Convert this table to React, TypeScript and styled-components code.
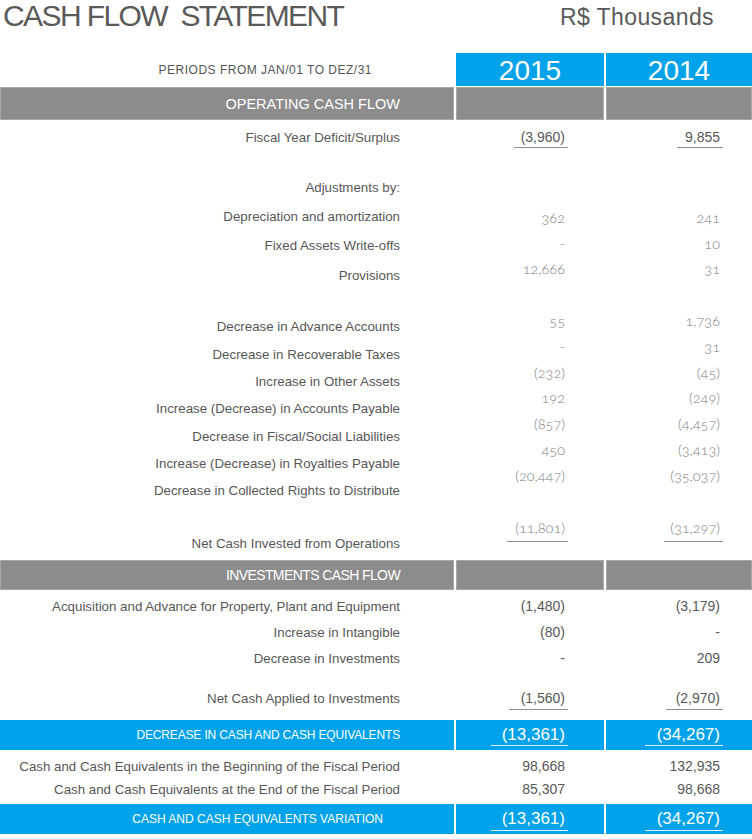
import React from "react";
import styled, { createGlobalStyle, css } from "styled-components";

const GlobalStyle = createGlobalStyle`
  *, *::before, *::after { box-sizing: border-box; }
  html, body { margin: 0; padding: 0; background: #ffffff; }
  body { font-family: "Liberation Sans", Arial, sans-serif; color: #555555; }
`;

const COLS = "454px 148px 146px";
const PAD = { label: 54, y2015: 36, y2014: 29 };

const Page = styled.div`
  width: 752px;
  overflow: hidden;
`;

const TitleBar = styled.header`
  display: flex;
  justify-content: space-between;
  align-items: flex-start;
  height: 53px;
`;

const Title = styled.h1`
  margin: 0 0 0 3px;
  font-weight: 400;
  font-size: 30px;
  line-height: 32px;
  letter-spacing: -1.6px;
  color: #5a5a5a;
  white-space: pre;
`;

const Unit = styled.div`
  margin: 4px 38px 0 0;
  font-size: 23px;
  line-height: 26px;
  letter-spacing: 0.4px;
  color: #5a5a5a;
`;

const Row = styled.div<{ $h: number; $mt?: number }>`
  display: grid;
  grid-template-columns: ${COLS};
  column-gap: 2px;
  height: ${(p) => p.$h}px;
  margin-top: ${(p) => p.$mt ?? 0}px;
`;

type Tone = "plain" | "gray" | "blue";

const Cell = styled.div<{ $tone: Tone; $pr?: number; $center?: boolean }>`
  display: flex;
  align-items: center;
  justify-content: ${(p) => (p.$center ? "center" : "flex-end")};
  padding-right: ${(p) => p.$pr ?? 0}px;
  white-space: nowrap;
  ${(p) =>
    p.$tone === "gray" &&
    css`
      background: #8c8c8c;
      box-shadow: inset 0 0 0 1px #a8a8a8;
      color: #ffffff;
    `}
  ${(p) =>
    p.$tone === "blue" &&
    css`
      background: #00a3e9;
      color: #ffffff;
    `}
  ${(p) =>
    p.$tone === "plain" &&
    css`
      color: #555555;
    `}
`;

const Periods = styled.span`
  font-size: 12px;
  letter-spacing: 0.5px;
  color: #555555;
`;

const Year = styled.span`
  font-size: 28px;
  line-height: 30px;
  padding-top: 3px;
`;

const BandLabel = styled.span<{ $size: number; $ls?: number }>`
  font-size: ${(p) => p.$size}px;
  letter-spacing: ${(p) => p.$ls ?? 0}px;
  line-height: 20px;
`;

const Block = styled.div<{ $h: number }>`
  display: grid;
  grid-template-columns: ${COLS};
  column-gap: 2px;
  height: ${(p) => p.$h}px;
`;

const Stack = styled.div<{ $pt: number; $pr: number }>`
  display: flex;
  flex-direction: column;
  align-items: flex-end;
  padding-top: ${(p) => p.$pt}px;
  padding-right: ${(p) => p.$pr}px;
`;

type Kind = "label" | "value" | "light" | "band";

const Line = styled.div<{ $row: number; $kind: Kind }>`
  height: ${(p) => p.$row}px;
  display: flex;
  align-items: center;
  justify-content: flex-end;
  white-space: nowrap;
  ${(p) =>
    p.$kind === "label" &&
    css`
      font-size: 13.3px;
      color: #575757;
    `}
  ${(p) =>
    p.$kind === "value" &&
    css`
      font-size: 14px;
      color: #585858;
    `}
  ${(p) =>
    p.$kind === "light" &&
    css`
      font-family: Lato, "Open Sans", sans-serif;
      font-weight: 300;
      font-size: 14.5px;
      color: #7e7e7e;
      font-feature-settings: "onum" 1, "lnum" 0;
    `}
  ${(p) =>
    p.$kind === "band" &&
    css`
      font-size: 17px;
      color: #ffffff;
    `}
`;

const Figure = styled.span<{ $w?: number; $gap?: number; $ul?: "gray" | "white" }>`
  display: inline-block;
  line-height: 18px;
  text-align: right;
  padding-right: 3px;
  min-width: ${(p) => p.$w ?? 0}px;
  ${(p) =>
    p.$ul &&
    css`
      border-bottom: 1px solid ${p.$ul === "white" ? "rgba(255,255,255,0.85)" : "#8e8e8e"};
      padding-bottom: ${p.$gap ?? 0}px;
      margin-bottom: -${(p.$gap ?? 0) + 1}px;
    `}
`;

type Val = { text: string; w?: number };

interface StackSpec {
  pt: number;
  row: number;
}

interface BlockProps {
  h: number;
  labels: string[];
  lab: StackSpec;
  val: StackSpec;
  kind: Kind;
  a: Val[];
  b: Val[];
  ul?: boolean;
  gap?: number;
}

const DataBlock: React.FC<BlockProps> = ({ h, labels, lab, val, kind, a, b, ul, gap }) => (
  <Block $h={h}>
    <Stack $pt={lab.pt} $pr={PAD.label}>
      {labels.map((l) => (
        <Line key={l} $row={lab.row} $kind="label">
          {l}
        </Line>
      ))}
    </Stack>
    {[a, b].map((col, ci) => (
      <Stack key={ci} $pt={val.pt} $pr={ci === 0 ? PAD.y2015 : PAD.y2014}>
        {col.map((v, i) => (
          <Line key={i} $row={val.row} $kind={kind}>
            <Figure $w={v.w} $ul={ul ? "gray" : undefined} $gap={gap}>
              {v.text}
            </Figure>
          </Line>
        ))}
      </Stack>
    ))}
  </Block>
);

interface BandProps {
  h: number;
  tone: "gray" | "blue";
  label: string;
  size: number;
  ls?: number;
  pr?: number;
  a?: Val;
  b?: Val;
  gap?: number;
}

const Band: React.FC<BandProps> = ({ h, tone, label, size, ls, pr, a, b, gap }) => (
  <Row $h={h}>
    <Cell $tone={tone} $pr={pr ?? PAD.label}>
      <BandLabel $size={size} $ls={ls}>
        {label}
      </BandLabel>
    </Cell>
    {[a, b].map((v, i) => (
      <Cell key={i} $tone={tone} $pr={i === 0 ? PAD.y2015 : PAD.y2014}>
        {v && (
          <Line $row={h} $kind="band">
            <Figure $w={v.w} $ul="white" $gap={gap}>
              {v.text}
            </Figure>
          </Line>
        )}
      </Cell>
    ))}
  </Row>
);

const v = (text: string, w?: number): Val => ({ text, w });

export default function App() {
  return (
    <Page>
      <GlobalStyle />
      <TitleBar>
        <Title>{"CASH FLOW  STATEMENT"}</Title>
        <Unit>R$ Thousands</Unit>
      </TitleBar>

      <Row $h={30}>
        <Cell $tone="plain" $pr={82}>
          <Periods>PERIODS FROM JAN/01 TO DEZ/31</Periods>
        </Cell>
        <Cell $tone="blue" $center>
          <Year>2015</Year>
        </Cell>
        <Cell $tone="blue" $center>
          <Year>2014</Year>
        </Cell>
      </Row>

      <Row $h={33} $mt={4}>
        <Cell $tone="gray" $pr={PAD.label}>
          <BandLabel $size={14.5}>OPERATING CASH FLOW</BandLabel>
        </Cell>
        <Cell $tone="gray" />
        <Cell $tone="gray" />
      </Row>

      <DataBlock
        h={40}
        labels={["Fiscal Year Deficit/Surplus"]}
        lab={{ pt: 7, row: 20 }}
        val={{ pt: 7, row: 20 }}
        kind="value"
        a={[v("(3,960)", 54)]}
        b={[v("9,855", 46)]}
        ul
        gap={1}
      />

      <DataBlock
        h={130}
        labels={[
          "Adjustments by:",
          "Depreciation and amortization",
          "Fixed Assets Write-offs",
          "Provisions",
        ]}
        lab={{ pt: 12.5, row: 29.3 }}
        val={{ pt: 45.25, row: 25.5 }}
        kind="light"
        a={[v("362"), v("-"), v("12,666")]}
        b={[v("241"), v("10"), v("31")]}
      />

      <DataBlock
        h={220}
        labels={[
          "Decrease in Advance Accounts",
          "Decrease in Recoverable Taxes",
          "Increase in Other Assets",
          "Increase (Decrease) in Accounts Payable",
          "Decrease in Fiscal/Social Liabilities",
          "Increase (Decrease) in Royalties Payable",
          "Decrease in Collected Rights to Distribute",
        ]}
        lab={{ pt: 23.3, row: 27.33 }}
        val={{ pt: 18.1, row: 25.83 }}
        kind="light"
        a={[v("55"), v("-"), v("(232)"), v("192"), v("(857)"), v("450"), v("(20,447)")]}
        b={[v("1,736"), v("31"), v("(45)"), v("(249)"), v("(4,457)"), v("(3,413)"), v("(35,037)")]}
      />

      <DataBlock
        h={50}
        labels={["Net Cash Invested from Operations"]}
        lab={{ pt: 23, row: 20 }}
        val={{ pt: 8, row: 20 }}
        kind="light"
        a={[v("(11,801)", 61)]}
        b={[v("(31,297)", 59)]}
        ul
        gap={4}
      />

      <Band h={30} tone="gray" label="INVESTMENTS CASH FLOW" size={14} ls={-0.6} />

      <DataBlock
        h={90}
        labels={[
          "Acquisition and Advance for Property, Plant and Equipment",
          "Increase in Intangible",
          "Decrease in Investments",
        ]}
        lab={{ pt: 3, row: 26 }}
        val={{ pt: 3, row: 26 }}
        kind="value"
        a={[v("(1,480)"), v("(80)"), v("-")]}
        b={[v("(3,179)"), v("-"), v("209")]}
      />

      <DataBlock
        h={40}
        labels={["Net Cash Applied to Investments"]}
        lab={{ pt: 8, row: 20 }}
        val={{ pt: 8, row: 20 }}
        kind="value"
        a={[v("(1,560)", 59)]}
        b={[v("(2,970)", 57)]}
        ul
        gap={2}
      />

      <Band
        h={30}
        tone="blue"
        label="DECREASE IN CASH AND CASH EQUIVALENTS"
        size={12}
        ls={-0.15}
        a={v("(13,361)", 77)}
        b={v("(34,267)", 78)}
        gap={1}
      />

      <DataBlock
        h={54}
        labels={[
          "Cash and Cash Equivalents in the Beginning of the Fiscal Period",
          "Cash and Cash Equivalents at the End of the Fiscal Period",
        ]}
        lab={{ pt: 4.5, row: 23 }}
        val={{ pt: 4.5, row: 23 }}
        kind="value"
        a={[v("98,668"), v("85,307")]}
        b={[v("132,935"), v("98,668")]}
      />

      <Band
        h={30}
        tone="blue"
        label="CASH AND CASH EQUIVALENTS VARIATION"
        size={12}
        pr={71}
        a={v("(13,361)", 77)}
        b={v("(34,267)", 78)}
        gap={2}
      />
    </Page>
  );
}
